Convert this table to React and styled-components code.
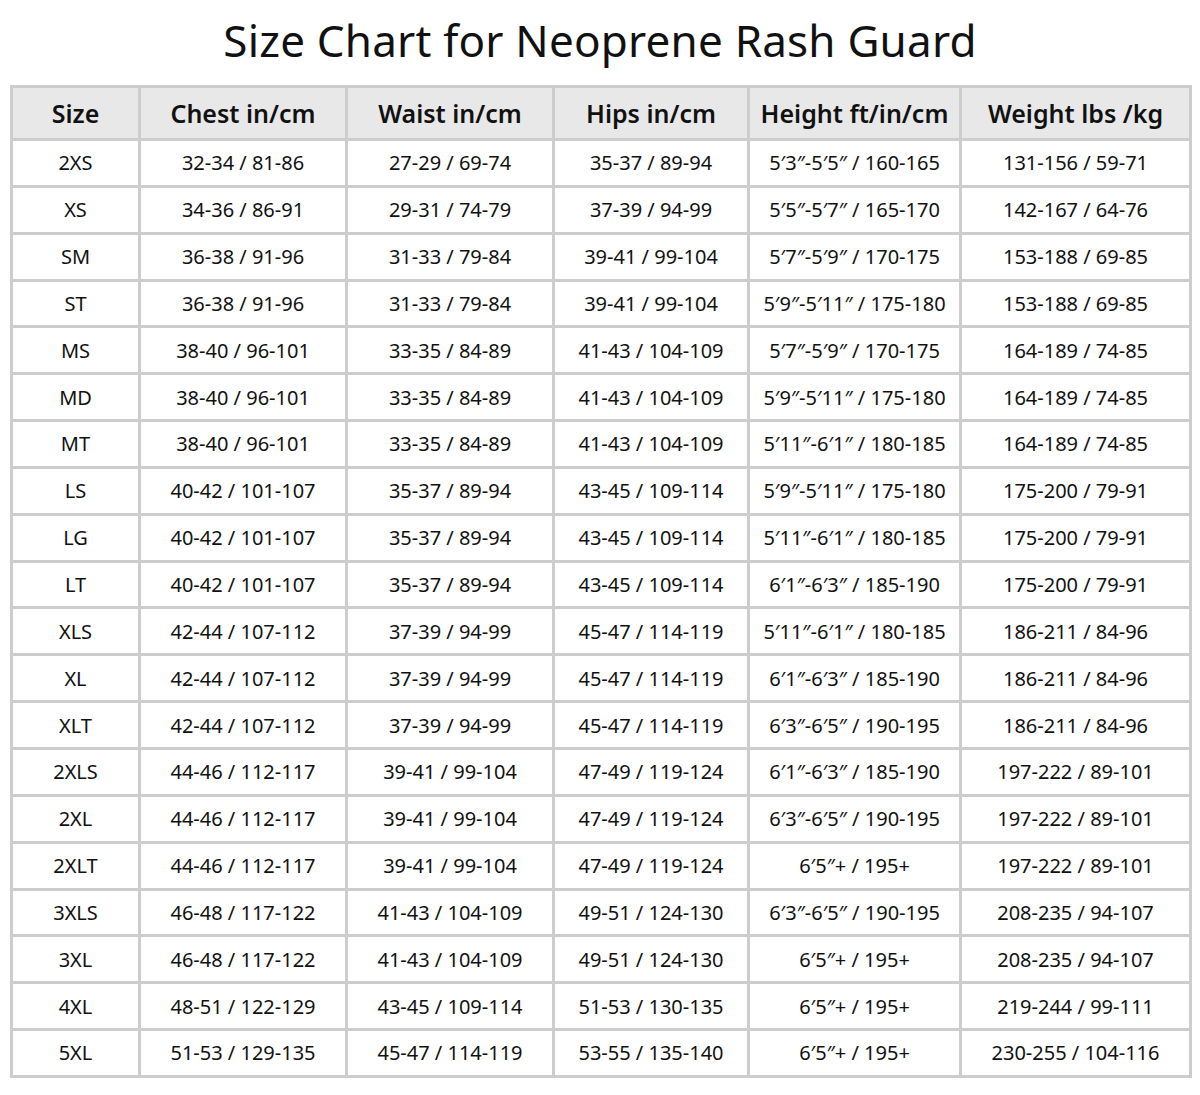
import styled, { createGlobalStyle } from "styled-components";

const GlobalStyle = createGlobalStyle`
  body {
    margin: 0;
    background: #fff;
    font-family: "Noto Sans", "Open Sans", sans-serif;
    color: #111;
  }
`;

const Page = styled.div`
  width: 1200px;
  padding: 12px 10px 0;
  box-sizing: border-box;
`;

const Title = styled.h1`
  margin: 0 0 16px;
  height: 57px;
  line-height: 57px;
  text-align: center;
  font-size: 44px;
  font-weight: 400;
  letter-spacing: 0.2px;
  color: #111;
`;

const Table = styled.table`
  width: 1179px;
  border-collapse: collapse;
  table-layout: fixed;
  border: 3px solid #cdcdcd;
`;

const HeadCell = styled.th`
  height: 50px;
  padding: 0;
  background: #e8e8e8;
  border: 3px solid #cdcdcd;
  font-size: 25px;
  font-weight: 600;
  text-align: center;
  color: #111;
`;

const Cell = styled.td`
  height: 43.85px;
  padding: 0;
  border: 3px solid #cdcdcd;
  font-size: 20px;
  text-align: center;
  color: #111;
`;

const columns = [
  { label: "Size", width: 128 },
  { label: "Chest in/cm", width: 207 },
  { label: "Waist in/cm", width: 207 },
  { label: "Hips in/cm", width: 195 },
  { label: "Height ft/in/cm", width: 212 },
  { label: "Weight lbs /kg", width: 230 },
];

const rows = [
  ["2XS", "32-34 / 81-86", "27-29 / 69-74", "35-37 / 89-94", "5′3″-5′5″ / 160-165", "131-156 / 59-71"],
  ["XS", "34-36 / 86-91", "29-31 / 74-79", "37-39 / 94-99", "5′5″-5′7″ / 165-170", "142-167 / 64-76"],
  ["SM", "36-38 / 91-96", "31-33 / 79-84", "39-41 / 99-104", "5′7″-5′9″ / 170-175", "153-188 / 69-85"],
  ["ST", "36-38 / 91-96", "31-33 / 79-84", "39-41 / 99-104", "5′9″-5′11″ / 175-180", "153-188 / 69-85"],
  ["MS", "38-40 / 96-101", "33-35 / 84-89", "41-43 / 104-109", "5′7″-5′9″ / 170-175", "164-189 / 74-85"],
  ["MD", "38-40 / 96-101", "33-35 / 84-89", "41-43 / 104-109", "5′9″-5′11″ / 175-180", "164-189 / 74-85"],
  ["MT", "38-40 / 96-101", "33-35 / 84-89", "41-43 / 104-109", "5′11″-6′1″ / 180-185", "164-189 / 74-85"],
  ["LS", "40-42 / 101-107", "35-37 / 89-94", "43-45 / 109-114", "5′9″-5′11″ / 175-180", "175-200 / 79-91"],
  ["LG", "40-42 / 101-107", "35-37 / 89-94", "43-45 / 109-114", "5′11″-6′1″ / 180-185", "175-200 / 79-91"],
  ["LT", "40-42 / 101-107", "35-37 / 89-94", "43-45 / 109-114", "6′1″-6′3″ / 185-190", "175-200 / 79-91"],
  ["XLS", "42-44 / 107-112", "37-39 / 94-99", "45-47 / 114-119", "5′11″-6′1″ / 180-185", "186-211 / 84-96"],
  ["XL", "42-44 / 107-112", "37-39 / 94-99", "45-47 / 114-119", "6′1″-6′3″ / 185-190", "186-211 / 84-96"],
  ["XLT", "42-44 / 107-112", "37-39 / 94-99", "45-47 / 114-119", "6′3″-6′5″ / 190-195", "186-211 / 84-96"],
  ["2XLS", "44-46 / 112-117", "39-41 / 99-104", "47-49 / 119-124", "6′1″-6′3″ / 185-190", "197-222 / 89-101"],
  ["2XL", "44-46 / 112-117", "39-41 / 99-104", "47-49 / 119-124", "6′3″-6′5″ / 190-195", "197-222 / 89-101"],
  ["2XLT", "44-46 / 112-117", "39-41 / 99-104", "47-49 / 119-124", "6′5″+ / 195+", "197-222 / 89-101"],
  ["3XLS", "46-48 / 117-122", "41-43 / 104-109", "49-51 / 124-130", "6′3″-6′5″ / 190-195", "208-235 / 94-107"],
  ["3XL", "46-48 / 117-122", "41-43 / 104-109", "49-51 / 124-130", "6′5″+ / 195+", "208-235 / 94-107"],
  ["4XL", "48-51 / 122-129", "43-45 / 109-114", "51-53 / 130-135", "6′5″+ / 195+", "219-244 / 99-111"],
  ["5XL", "51-53 / 129-135", "45-47 / 114-119", "53-55 / 135-140", "6′5″+ / 195+", "230-255 / 104-116"],
];

export default function App() {
  return (
    <>
      <GlobalStyle />
      <Page>
        <Title>Size Chart for Neoprene Rash Guard</Title>
        <Table>
          <colgroup>
            {columns.map((c) => (
              <col key={c.label} style={{ width: c.width }} />
            ))}
          </colgroup>
          <thead>
            <tr>
              {columns.map((c) => (
                <HeadCell key={c.label}>{c.label}</HeadCell>
              ))}
            </tr>
          </thead>
          <tbody>
            {rows.map((r) => (
              <tr key={r[0]}>
                {r.map((v, i) => (
                  <Cell key={i}>{v}</Cell>
                ))}
              </tr>
            ))}
          </tbody>
        </Table>
      </Page>
    </>
  );
}
